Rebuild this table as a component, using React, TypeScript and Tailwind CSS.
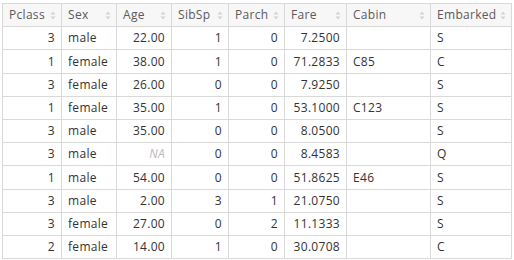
import React from "react";

const cols = [
  { name: "Pclass", num: true },
  { name: "Sex", num: false },
  { name: "Age", num: true },
  { name: "SibSp", num: true },
  { name: "Parch", num: true },
  { name: "Fare", num: true },
  { name: "Cabin", num: false },
  { name: "Embarked", num: false },
];

const rows: (string | null)[][] = [
  ["3", "male", "22.00", "1", "0", "7.2500", "", "S"],
  ["1", "female", "38.00", "1", "0", "71.2833", "C85", "C"],
  ["3", "female", "26.00", "0", "0", "7.9250", "", "S"],
  ["1", "female", "35.00", "1", "0", "53.1000", "C123", "S"],
  ["3", "male", "35.00", "0", "0", "8.0500", "", "S"],
  ["3", "male", null, "0", "0", "8.4583", "", "Q"],
  ["1", "male", "54.00", "0", "0", "51.8625", "E46", "S"],
  ["3", "male", "2.00", "3", "1", "21.0750", "", "S"],
  ["3", "female", "27.00", "0", "2", "11.1333", "", "S"],
  ["2", "female", "14.00", "1", "0", "30.0708", "", "C"],
];

const rowH = [
  "h-[23px]",
  "h-[24px]",
  "h-[23px]",
  "h-[23px]",
  "h-[23px]",
  "h-[23px]",
  "h-[24px]",
  "h-[23px]",
  "h-[23px]",
  "h-[23px]",
];

function SortIcon() {
  return (
    <svg width="6" height="9" viewBox="0 0 6 9" className="shrink-0">
      <path d="M3 0.5 L5.5 3.5 L0.5 3.5 Z" fill="#d4d4d4" />
      <path d="M3 8.5 L5.5 5.5 L0.5 5.5 Z" fill="#d4d4d4" />
    </svg>
  );
}

const grid =
  "grid grid-cols-[59px_55px_55px_57px_56px_62px_84px_81px]";

export default function App() {
  return (
    <div
      className="w-[514px] h-[260px] bg-white overflow-hidden pt-[3px] pl-[2px] text-[12px]"
      style={{ fontFamily: '"Open Sans", "Liberation Sans", sans-serif' }}
    >
      <div className="w-[510px] border-l border-t border-[#d9d9d9]">
        <div className={`${grid} h-[23px] bg-[#f7f7f7] border-b border-[#d9d9d9]`}>
          {cols.map((c) => (
            <div
              key={c.name}
              className="flex items-center justify-between border-r border-[#d9d9d9] pl-[6px] pr-[5px] text-[#5a5a5a] tracking-[0.3px]"
            >
              <span>{c.name}</span>
              <SortIcon />
            </div>
          ))}
        </div>
        {rows.map((r, i) => (
          <div key={i} className={`${grid} ${rowH[i]} border-b border-[#d9d9d9]`}>
            {r.map((v, j) => (
              <div
                key={j}
                className={`flex items-center border-r border-[#d9d9d9] px-[6px] tracking-[0.3px] ${
                  cols[j].num ? "justify-end" : "justify-start"
                } ${v === null ? "text-[#bbbbbb] italic" : "text-[#333]"}`}
              >
                {v === null ? "NA" : v}
              </div>
            ))}
          </div>
        ))}
      </div>
    </div>
  );
}
